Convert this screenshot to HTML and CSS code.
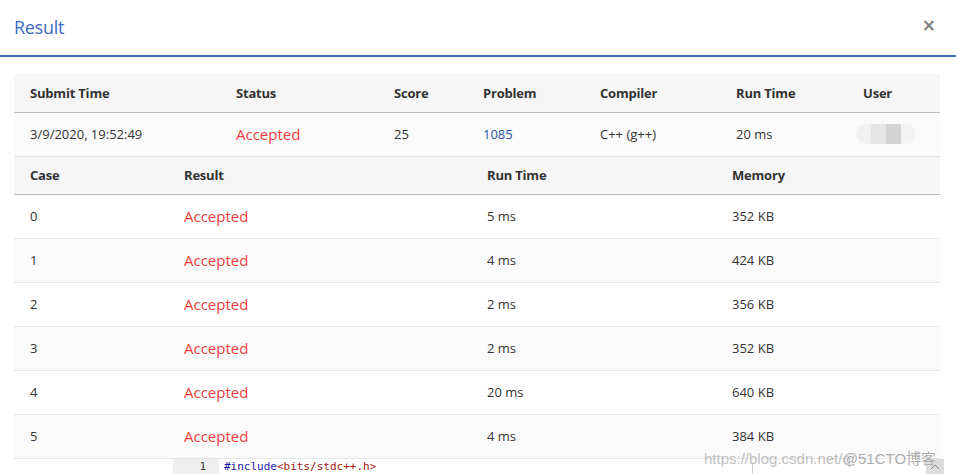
FILE: index.html
```html
<!DOCTYPE html>
<html>
<head>
<meta charset="utf-8">
<link rel="stylesheet" href="styles.css">
</head>
<body>
<div class="modal">
  <div class="modal-header">
    <span class="title">Result</span>
    <span class="close">×</span>
  </div>
  <div class="modal-body">
    <table class="tbl summary">
      <colgroup>
        <col style="width:206px"><col style="width:158px"><col style="width:89px"><col style="width:117px"><col style="width:136px"><col style="width:127px"><col>
      </colgroup>
      <thead>
        <tr><th>Submit Time</th><th>Status</th><th>Score</th><th>Problem</th><th>Compiler</th><th>Run Time</th><th>User</th></tr>
      </thead>
      <tbody>
        <tr class="odd">
          <td>3/9/2020, 19:52:49</td>
          <td class="ok">Accepted</td>
          <td>25</td>
          <td class="link">1085</td>
          <td>C++ (g++)</td>
          <td>20 ms</td>
          <td><span class="blur"><i class="b1"></i><i class="b2"></i><i class="b3"></i><i class="b4"></i></span></td>
        </tr>
      </tbody>
    </table>
    <table class="tbl cases">
      <colgroup>
        <col style="width:154px"><col style="width:303px"><col style="width:245px"><col>
      </colgroup>
      <thead>
        <tr><th>Case</th><th>Result</th><th>Run Time</th><th>Memory</th></tr>
      </thead>
      <tbody>
        <tr><td>0</td><td class="ok">Accepted</td><td>5 ms</td><td>352 KB</td></tr>
        <tr class="odd"><td>1</td><td class="ok">Accepted</td><td>4 ms</td><td>424 KB</td></tr>
        <tr><td>2</td><td class="ok">Accepted</td><td>2 ms</td><td>356 KB</td></tr>
        <tr class="odd"><td>3</td><td class="ok">Accepted</td><td>2 ms</td><td>352 KB</td></tr>
        <tr><td>4</td><td class="ok">Accepted</td><td>20 ms</td><td>640 KB</td></tr>
        <tr class="odd"><td>5</td><td class="ok">Accepted</td><td>4 ms</td><td>384 KB</td></tr>
      </tbody>
    </table>
    <div class="code">
      <div class="gutter">1</div>
      <div class="line"><span class="kw">#include</span><span class="str">&lt;bits/stdc++.h&gt;</span></div>
      <div class="rule"></div>
      <div class="scroll"><svg width="10" height="6" viewBox="0 0 10 6"><path d="M1 5 L5 1 L9 5" fill="none" stroke="#888" stroke-width="1"/></svg></div>
    </div>
  </div>
  <div class="watermark"><span class="wm1">https://blog.csdn.net/q</span><span class="wm2">@51CTO博客</span></div>
</div>
</body>
</html>
```
FILE: styles.css
```css
html, body {
  margin: 0;
  padding: 0;
  background: #fff;
}
body {
  font-family: "Open Sans", "Noto Sans", sans-serif;
  color: #333;
  width: 956px;
  height: 474px;
  overflow: hidden;
}
.modal {
  position: relative;
  height: 474px;
}
.modal-header {
  height: 55px;
  border-bottom: 2px solid #3e6cc3;
  display: flex;
  align-items: center;
  justify-content: space-between;
  padding: 0 20px 0 14px;
  box-sizing: content-box;
}
.title {
  font-family: "Open Sans", sans-serif;
  font-size: 18px;
  color: #3c6bc6;
  letter-spacing: -0.3px;
  margin-top: -1px;
}
.close {
  font-family: "DejaVu Sans", sans-serif;
  font-size: 17px;
  font-weight: bold;
  color: #808080;
  line-height: 1;
  margin-top: -5px;
}
.modal-body {
  padding: 17px 16px 0 14px;
}
.tbl {
  width: 926px;
  border-collapse: collapse;
  table-layout: fixed;
  font-size: 13px;
}
.tbl th {
  background: #f6f6f6;
  text-align: left;
  font-weight: 700;
  color: #333;
  height: 35px;
  padding: 0 0 2px 16px;
  border-bottom: 1px solid #bcbcbc;
  letter-spacing: -0.2px;
}
.tbl td {
  height: 41px;
  padding: 0 0 2px 16px;
  border-bottom: 1px solid #e6e6e6;
  color: #333;
  background: #fff;
}
.summary th {
  height: 37px;
  padding-bottom: 1px;
}
.tbl tr.odd td { background: #fafafa; }
.tbl td.ok {
  color: #f53c3c;
  font-size: 15px;
}
.tbl td.link { color: #1f56a0; }
.blur {
  display: inline-flex;
  width: 60px;
  height: 20px;
  border-radius: 10px;
  overflow: hidden;
  vertical-align: middle;
  margin-left: -7px;
}
.blur i { display: block; height: 20px; width: 15px; }
.blur .b1 { background: #f1f1f1; }
.blur .b2 { background: #e6e6e6; }
.blur .b3 { background: #d3d3d3; }
.blur .b4 { background: #f3f3f3; }
.code {
  display: flex;
  height: 16px;
  font-family: "DejaVu Sans Mono", monospace;
  font-size: 11px;
  line-height: 16px;
  position: relative;
}
.gutter {
  margin-left: 159px;
  width: 46px;
  background: #efefef;
  text-align: right;
  padding-right: 13px;
  box-sizing: border-box;
  color: #444;
}
.line {
  padding-left: 5px;
  width: 528px;
}
.kw { color: #1a1aa6; }
.str { color: #a31515; }
.rule {
  width: 1px;
  background: #cfcfcf;
  margin-top: 4px;
}
.scroll {
  margin-left: auto;
  width: 18px;
  background: #dcdcdc;
  display: flex;
  align-items: center;
  justify-content: center;
  margin-right: -4px;
}
.watermark {
  position: absolute;
  left: 704px;
  top: 447px;
  font-family: "Liberation Sans", sans-serif;
  font-size: 15px;
  white-space: nowrap;
  pointer-events: none;
}
.wm1 { color: rgba(170,170,170,0.75); }
.wm2 {
  margin-left: -8px;
  color: rgba(150,150,150,0.8);
  text-shadow: 0 0 1px #fff;
  font-family: "Liberation Sans", "Noto Sans CJK SC", sans-serif;
}
```
